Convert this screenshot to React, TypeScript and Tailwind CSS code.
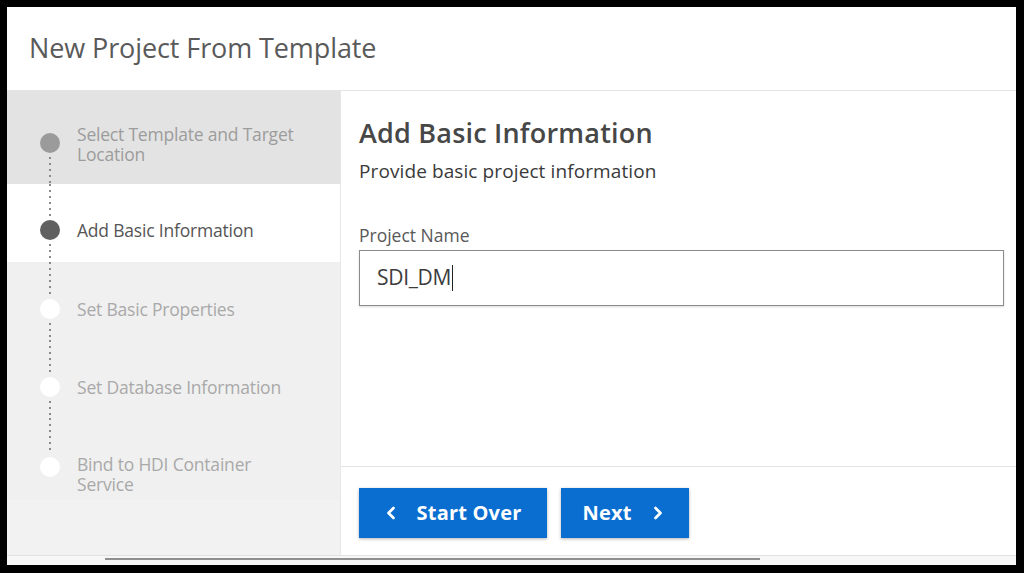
import { ChevronLeft, ChevronRight } from "lucide-react";

type Step = {
  label: string;
  state: "done" | "active" | "todo";
  rowClass: string;
  circleTop: string;
  textTop: string;
};

const steps: Step[] = [
  { label: "Select Template and Target Location", state: "done", rowClass: "h-[93px] bg-[#e3e3e3]", circleTop: "h-[42px]", textTop: "pt-[33px]" },
  { label: "Add Basic Information", state: "active", rowClass: "h-[78px] bg-white", circleTop: "h-[36px]", textTop: "pt-[36px]" },
  { label: "Set Basic Properties", state: "todo", rowClass: "h-[78px]", circleTop: "h-[37px]", textTop: "pt-[37px]" },
  { label: "Set Database Information", state: "todo", rowClass: "h-[78px]", circleTop: "h-[37px]", textTop: "pt-[37px]" },
  { label: "Bind to HDI Container Service", state: "todo", rowClass: "h-[82px]", circleTop: "h-[39px]", textTop: "pt-[36px]" }
];

const dots = "w-[2px] bg-[repeating-linear-gradient(to_bottom,#8a8a8a_0,#8a8a8a_2px,transparent_2px,transparent_6px)]";

function StepRow({ step, first, last }: { step: Step; first: boolean; last: boolean }) {
  const circle =
    step.state === "done" ? "bg-[#9b9b9b]" : step.state === "active" ? "bg-[#606060]" : "bg-white";
  const text =
    step.state === "done" ? "text-[#9c9c9c]" : step.state === "active" ? "text-[#555555]" : "text-[#a9a9a9]";

  return (
    <div className={`flex ${step.rowClass}`}>
      <div className="ml-[33px] flex w-[20px] flex-col items-center">
        <div className={`${step.circleTop} flex justify-center pb-[4px]`}>
          {first ? null : <div className={`h-full ${dots}`} />}
        </div>
        <div className={`h-[20px] w-[20px] shrink-0 rounded-full ${circle}`} />
        <div className="flex flex-1 justify-center pt-[4px]">
          {last ? null : <div className={`h-full ${dots}`} />}
        </div>
      </div>
      <p className={`ml-[17px] w-[224px] text-[17.5px] leading-[20px] tracking-[-0.2px] ${text} ${step.textTop}`}>
        {step.label}
      </p>
    </div>
  );
}

export default function App() {
  return (
    <div
      className="h-[573px] w-[1024px] bg-black pb-[8px] pl-[7px] pr-[8px] pt-[7px]"
      style={{ fontFamily: '"Open Sans", "Noto Sans", sans-serif' }}
    >
      <div className="flex h-full flex-col bg-white">
        <header className="flex h-[84px] shrink-0 items-center border-b border-[#e4e4e4] pl-[22px]">
          <h1 className="text-[27px] tracking-[-0.1px] text-[#5a5a5a]">New Project From Template</h1>
        </header>

        <div className="flex min-h-0 flex-1">
          <aside className="flex w-[333px] shrink-0 flex-col bg-[#f0f0f0]">
            {steps.map((step, i) => (
              <StepRow key={step.label} step={step} first={i === 0} last={i === steps.length - 1} />
            ))}
            <div className="flex-1 bg-[#f2f2f2]" />
          </aside>

          <main className="flex flex-1 flex-col border-l border-[#e8e8e8]">
            <div className="flex-1 pl-[18px] pr-[12px] pt-[25px]">
              <h2 className="text-[27px] font-semibold leading-[34px] tracking-[0.2px] text-[#474747]">
                Add Basic Information
              </h2>
              <p className="mt-[8px] text-[19px] leading-[26px] tracking-[0.1px] text-[#3a3a3a]">
                Provide basic project information
              </p>
              <label className="mt-[39px] block text-[17.5px] leading-[24px] tracking-[0px] text-[#585858]">
                Project Name
              </label>
              <div className="mt-[3px] flex h-[56px] items-center border border-[#8c8c8c] pl-[17px] shadow-[0_1px_2px_rgba(0,0,0,0.15)]">
                <span className="text-[21px] tracking-[-0.3px] text-[#3c3c3c]">SDI_DM</span>
                <span className="ml-[1px] h-[26px] w-[1px] bg-[#222]" />
              </div>
            </div>

            <div className="flex h-[89px] shrink-0 items-start gap-[14px] border-t border-[#e4e4e4] pl-[18px] pt-[21px]">
              <button
                type="button"
                className="flex h-[50px] w-[188px] items-center justify-center gap-[16px] bg-[#0a6ed1] pr-[4px] text-[20px] font-bold tracking-[0.2px] text-white shadow-[0_1px_3px_rgba(0,0,0,0.3)]"
              >
                <ChevronLeft size={20} strokeWidth={3.2} />
                Start Over
              </button>
              <button
                type="button"
                className="flex h-[50px] w-[128px] items-center justify-center gap-[16px] bg-[#0a6ed1] text-[20px] font-bold tracking-[0.2px] text-white shadow-[0_1px_3px_rgba(0,0,0,0.3)]"
              >
                Next
                <ChevronRight size={20} strokeWidth={3.2} />
              </button>
            </div>
          </main>
        </div>

        <div className="h-[10px] shrink-0 border-t border-[#e2e2e2] bg-[#f7f7f7] pl-[98px] pt-[2px]">
          <div className="h-[2px] w-[655px] bg-[#8f8f8f]" />
        </div>
      </div>
    </div>
  );
}
